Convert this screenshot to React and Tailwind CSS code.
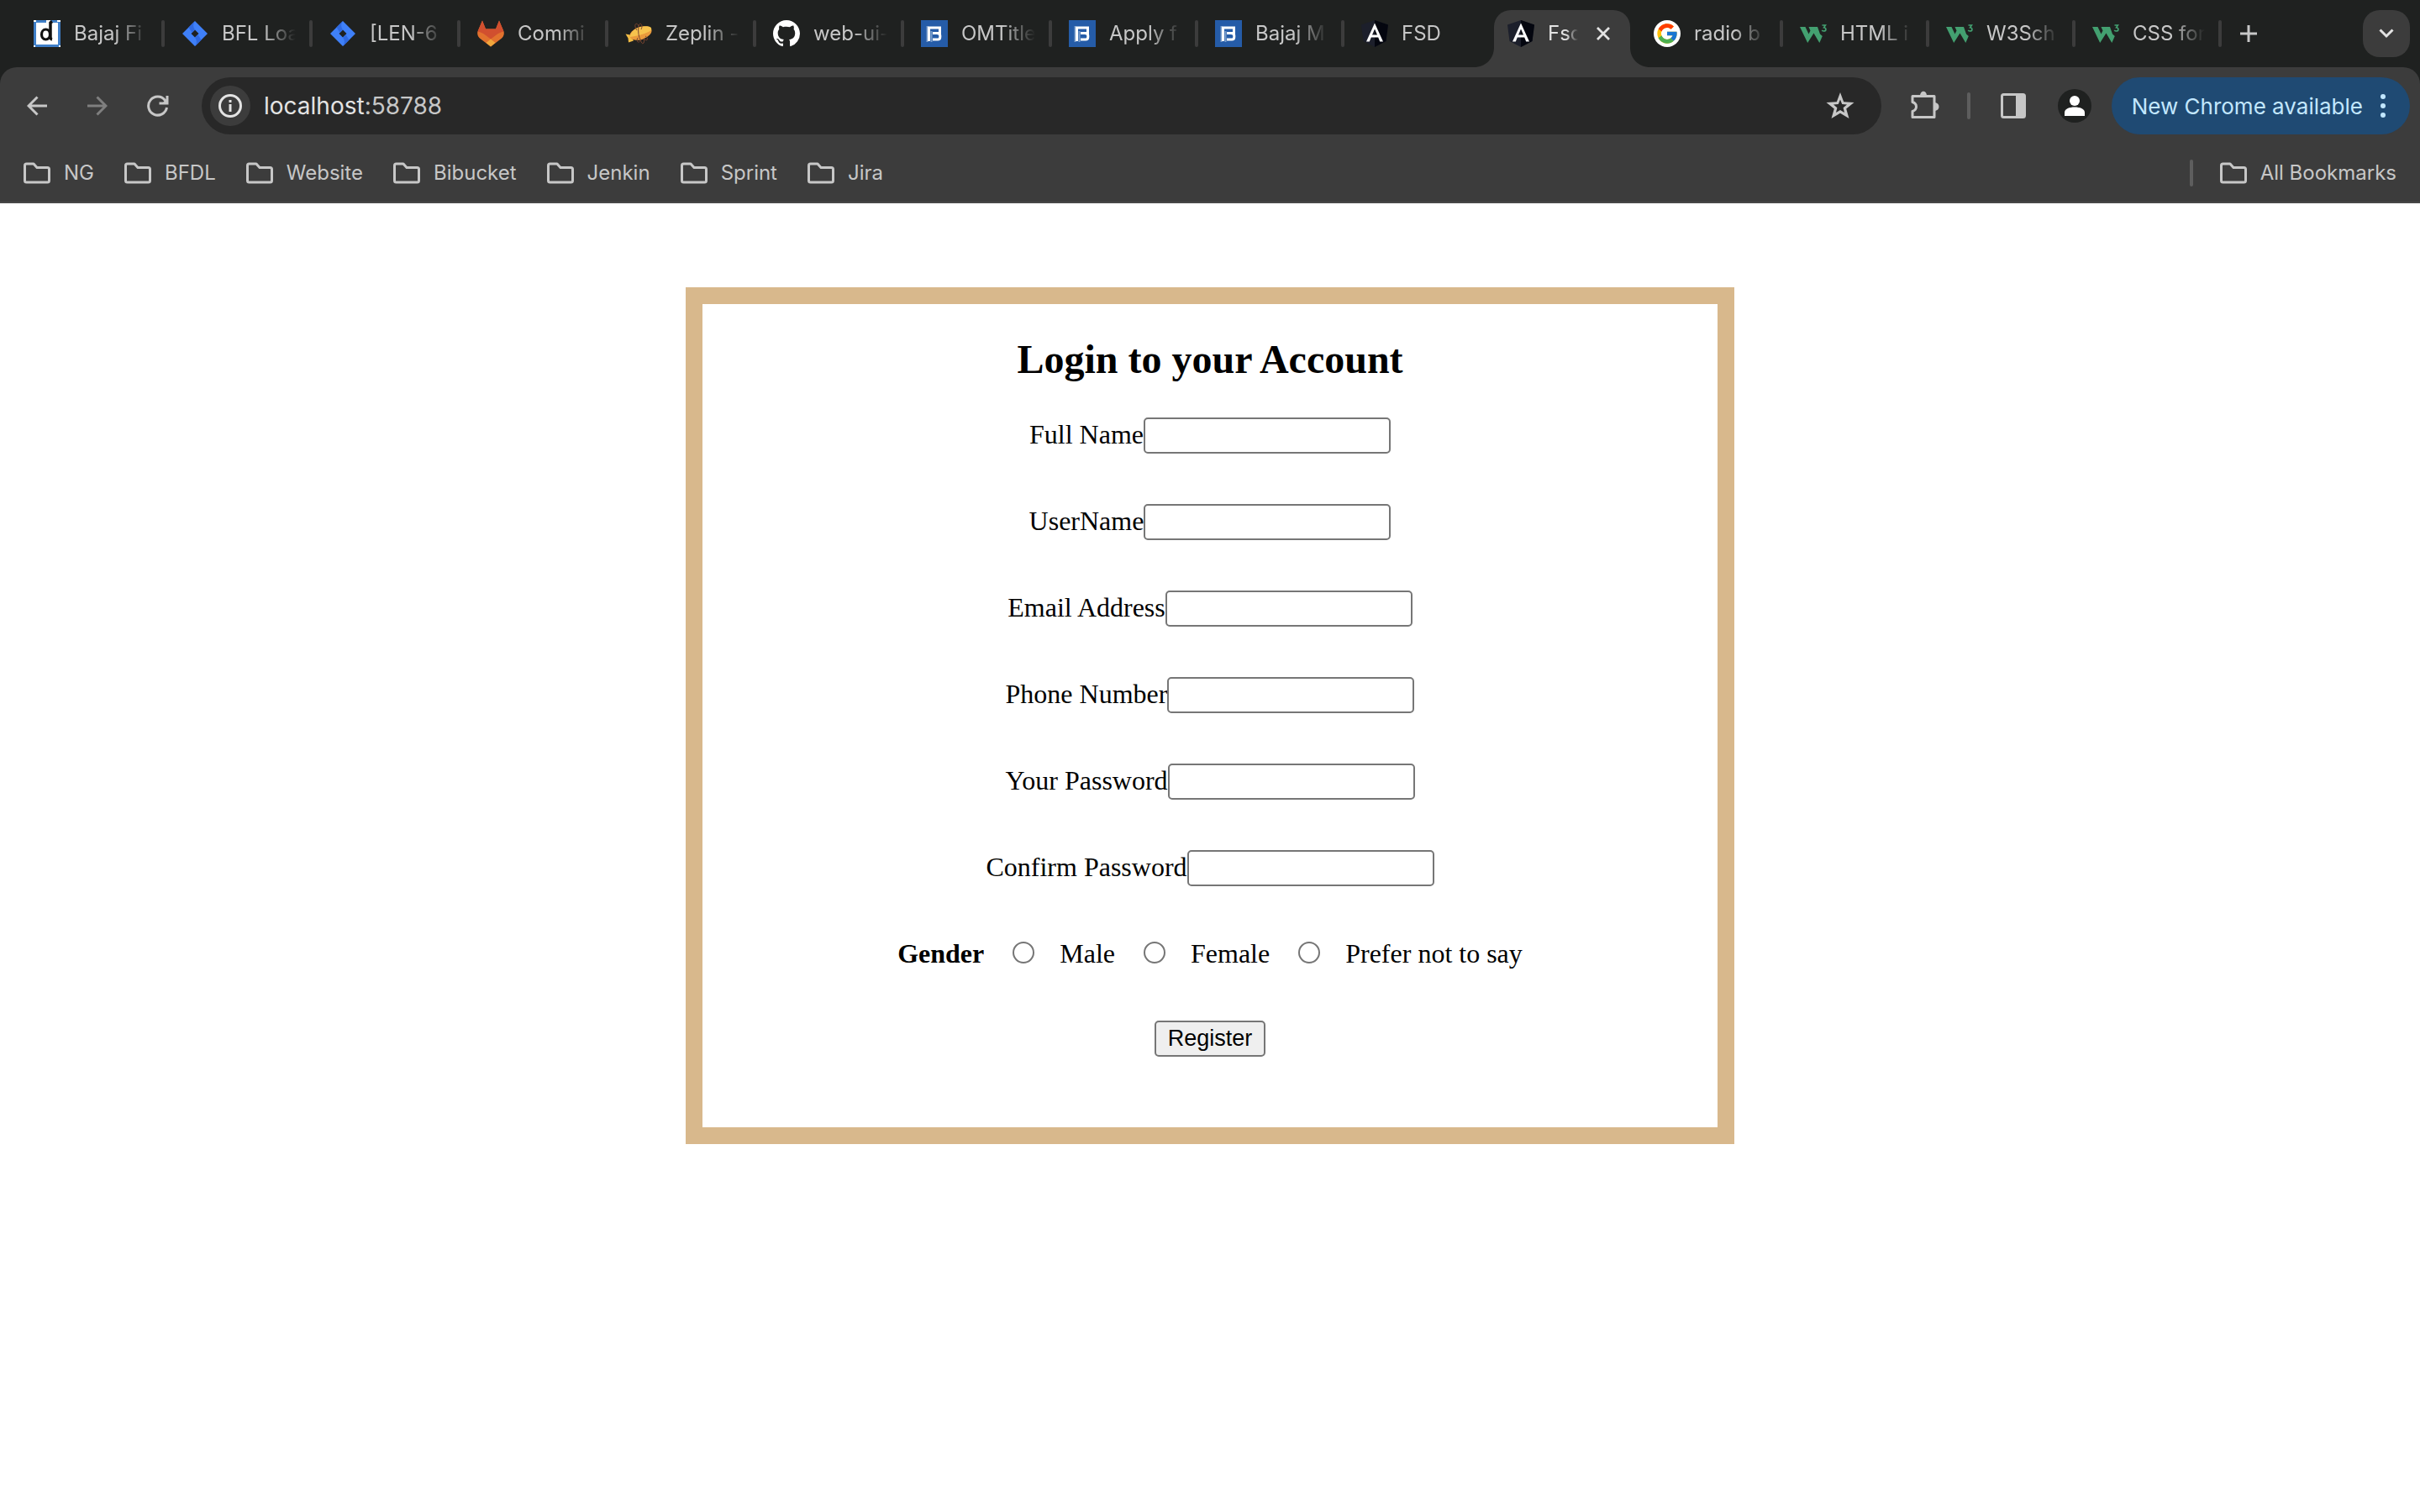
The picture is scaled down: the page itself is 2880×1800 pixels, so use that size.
import React from "react";
import { VscGithubInverted } from "react-icons/vsc";
import { FcGoogle } from "react-icons/fc";

function DocIcon() {
  return (
    <svg viewBox="0 0 32 32" className="size-8 shrink-0" aria-hidden="true">
      <rect width="32" height="32" fill="#3f7fc8" />
      <rect x="3" y="3" width="26" height="26" fill="#fff" />
      <path d="M0 0 H3 V2 H0 Z M15 0 H20 V5 H15 Z M28 0 H32 V2 H28 Z M0 30 H2 V32 H0 Z M30 30 H32 V32 H30 Z" fill="#fff" />
      <path d="M22 1.500 L20 3 V20 Q20 22.500 22 23" stroke="#111" strokeWidth="3.500" fill="none" />
      <ellipse cx="14.500" cy="17" rx="5" ry="6" stroke="#111" strokeWidth="3.200" fill="none" />
    </svg>
  );
}

function JiraIcon() {
  return (
    <svg viewBox="0 0 32 32" className="size-8 shrink-0" aria-hidden="true">
      <path d="M16 1 L31 16 L16 31 L1 16 Z M16 11.500 L11.500 16 L16 20.500 L20.500 16 Z" fill="#3f80f8" fillRule="evenodd" />
      <path d="M16 1 C13.500 4.500 13.500 8 16 11.500 L12.500 15 L8.500 8.500 Z" fill="#2f69e0" />
      <path d="M16 31 C18.500 27.500 18.500 24 16 20.500 L19.500 17 L23.500 23.500 Z" fill="#2f69e0" />
    </svg>
  );
}

function GitlabIcon() {
  return (
    <svg viewBox="0 0 32 32" className="size-8 shrink-0" aria-hidden="true">
      <path d="M6 0.500 L10 10.500 H22 L26 0.500 L31.500 13.500 C32.500 17 31 20 28.500 22 L16 31.500 L3.500 22 C1 20 -0.500 17 0.500 13.500 Z" fill="#e2722e" />
      <path d="M6 0.500 L10 10.500 H22 L26 0.500 L31.500 13.500 C28 14 24.500 16 22 18 L16 22.500 L10 18 C7.500 16 4 14 0.500 13.500 Z" fill="#d14f2f" />
      <path d="M16 22.500 L10.500 27 L16 31.500 L21.500 27 Z" fill="#f0a63c" />
    </svg>
  );
}

function ZeplinIcon() {
  return (
    <svg viewBox="0 0 32 32" className="size-8 shrink-0" aria-hidden="true">
      <path d="M0.500 16.500 L6 17.500 L10 24.500 L4 26.500 L3.500 21.500 Z" fill="#f3bd45" />
      <ellipse cx="18.500" cy="15.500" rx="13.500" ry="7.500" transform="rotate(-18 18.500 15.500)" fill="#e99a3c" />
      <path d="M5.500 20 C7 11 17 6.500 28 7.500 C31 8 32 10 30.500 12.500 C24 16.500 14 19 5.500 20 Z" fill="#f6c34d" />
      <path d="M14 12 C9 5 14 1.500 16 7 C17 1.500 22 5 19 11 M16 7 C15 14 16 20 18.500 24 C15 29 13 24 15 21 M18.500 24 C20 31 24 27 22 22 C28 27 27 20 24 19" stroke="#7a4530" strokeWidth="1" fill="none" />
    </svg>
  );
}

function BajajIcon() {
  return (
    <svg viewBox="0 0 32 32" className="size-8 shrink-0" aria-hidden="true">
      <rect width="32" height="32" fill="#255ca8" />
      <path d="M7.500 7 V26 M12.500 13 V26" stroke="#7d9fcc" strokeWidth="2" fill="none" />
      <path d="M9.500 25 V9 H22.500 V15.500 H14 M19 15.500 Q22.800 15.500 22.800 18.500 V20 Q22.800 23 20 23 H14" stroke="#fff" strokeWidth="3" fill="none" />
    </svg>
  );
}

function AngularIcon() {
  return (
    <svg viewBox="0 0 32 32" className="size-8 shrink-0" aria-hidden="true">
      <path d="M16 0 L32 5.500 L29.500 25 L16 32 L2.500 25 L0 5.500 Z" fill="#1c1f2b" />
      <path d="M16 0 L32 5.500 L29.500 25 L16 32 Z" fill="#04060f" />
      <path d="M16 3.500 L6 25.500 H9.800 L11.800 20.500 H20.200 L22.200 25.500 H26 Z M16 10.500 L19 17.500 H13 Z" fill="#fff" fillRule="evenodd" />
    </svg>
  );
}

function GoogleIcon() {
  return (
    <span className="flex size-8 shrink-0 items-center justify-center rounded-full bg-white">
      <FcGoogle className="size-7" aria-hidden="true" />
    </span>
  );
}

function GithubIcon() {
  return <VscGithubInverted className="size-8 shrink-0 text-white" aria-hidden="true" />;
}

function W3Icon() {
  return (
    <svg viewBox="0 0 32 32" className="size-8 shrink-0" aria-hidden="true">
      <path d="M0 8 H6.500 L10.500 16.500 L12.500 12.500 L10.500 8 H21 L24 16.500 L26.800 19 L23.300 27 L16.500 15.500 L9.200 27 Z" fill="#43a070" />
      <path d="M26.500 6 H30.500 L28.500 8.800 C32 9.300 31.500 13 28.500 13 C27.500 13 26.700 12.600 26.200 12" stroke="#43a070" strokeWidth="1.600" fill="none" />
    </svg>
  );
}

const tabsBefore = [
  { title: "Bajaj Fi", Icon: DocIcon, width: "w-44" },
  { title: "BFL Loa", Icon: JiraIcon, width: "w-44" },
  { title: "[LEN-6", Icon: JiraIcon, width: "w-44" },
  { title: "Commi", Icon: GitlabIcon, width: "w-44" },
  { title: "Zeplin -", Icon: ZeplinIcon, width: "w-44" },
  { title: "web-ui-", Icon: GithubIcon, width: "w-44" },
  { title: "OMTitle", Icon: BajajIcon, width: "w-44" },
  { title: "Apply f", Icon: BajajIcon, width: "w-[174px]" },
  { title: "Bajaj M", Icon: BajajIcon, width: "w-[174px]" },
  { title: "FSD", Icon: AngularIcon, width: "w-[174px]", last: true },
];

const tabsAfter = [
  { title: "radio b", Icon: GoogleIcon, width: "w-[174px]" },
  { title: "HTML i", Icon: W3Icon, width: "w-[174px]" },
  { title: "W3Sch", Icon: W3Icon, width: "w-[174px]" },
  { title: "CSS for", Icon: W3Icon, width: "w-[174px]" },
];

function Tab({ title, Icon, width, last }) {
  return (
    <div className={`flex h-full items-center ${width}`}>
      <button type="button" className="flex h-full min-w-0 flex-1 items-center gap-4 pr-4 pl-5 text-left">
        <Icon />
        <span className="min-w-0 flex-1 whitespace-nowrap mask-r-from-55% mask-r-to-100%">{title}</span>
      </button>
      <span className={`h-8 w-1 shrink-0 rounded-full ${last ? "" : "bg-[#3c3c3c]"}`} />
    </div>
  );
}

function TabStrip() {
  return (
    <div className="flex h-20 items-center bg-[#1f2120] pr-3 pl-5 text-2xl text-[#c7c7c7]">
      {tabsBefore.map((tab, i) => (
        <Tab key={i} {...tab} />
      ))}
      <div className="relative mr-2 ml-1 flex h-[68px] w-[162px] items-center self-end rounded-t-[20px] bg-[#3c3c3c] px-4 pb-3 text-[#e3e3e3]">
        <svg viewBox="0 0 24 24" className="absolute bottom-0 -left-6 size-6" aria-hidden="true">
          <path d="M24 0 V24 H0 C14 24 24 14 24 0 Z" fill="#3c3c3c" />
        </svg>
        <svg viewBox="0 0 24 24" className="absolute -right-6 bottom-0 size-6" aria-hidden="true">
          <path d="M0 0 V24 H24 C10 24 0 14 0 0 Z" fill="#3c3c3c" />
        </svg>
        <button type="button" className="flex min-w-0 flex-1 items-center gap-4 text-left">
          <AngularIcon />
          <span className="w-10 whitespace-nowrap mask-r-from-55% mask-r-to-90%">Fsd</span>
        </button>
        <button type="button" aria-label="Close tab" className="flex size-8 items-center justify-center">
          <svg viewBox="0 0 16 16" className="size-4" aria-hidden="true">
            <path d="M1 1 L15 15 M15 1 L1 15" stroke="#e3e3e3" strokeWidth="2.800" />
          </svg>
        </button>
      </div>
      {tabsAfter.map((tab, i) => (
        <Tab key={i} {...tab} />
      ))}
      <button type="button" aria-label="New tab" className="flex h-14 w-16 items-center justify-center">
        <svg viewBox="0 0 20 20" className="size-5" aria-hidden="true">
          <path d="M10 0 V20 M0 10 H20" stroke="#c7c7c7" strokeWidth="3" />
        </svg>
      </button>
      <button type="button" aria-label="Search tabs" className="ml-auto flex size-14 items-center justify-center rounded-[20px] bg-[#3c3c3c]">
        <svg viewBox="0 0 18 12" className="h-3 w-[18px]" aria-hidden="true">
          <path d="M1.500 1.500 L9 9 L16.500 1.500" stroke="#e3e3e3" strokeWidth="3" fill="none" />
        </svg>
      </button>
    </div>
  );
}

function ArrowIcon({ flip }) {
  return (
    <svg viewBox="0 0 24 24" className={`size-6 ${flip ? "-scale-x-100" : ""}`} fill="none" stroke="currentColor" strokeWidth="3" aria-hidden="true">
      <path d="M24 12 H2 M12.500 1.500 L2 12 L12.500 22.500" />
    </svg>
  );
}

function Toolbar() {
  return (
    <div className="bg-[#1f2120]">
      <div className="flex h-[92px] items-start rounded-t-[20px] bg-[#3c3c3c] pt-3 pr-3 text-[28px] text-[#c7c7c7]">
        <div className="flex h-[68px] shrink-0 items-center pl-8">
          <button type="button" aria-label="Back" className="mr-12">
            <ArrowIcon />
          </button>
          <button type="button" aria-label="Forward" className="mr-[46px] text-[#7f7f7f]">
            <ArrowIcon flip />
          </button>
          <button type="button" aria-label="Reload" className="mr-[38px]">
            <svg viewBox="0 0 28 26" className="h-[26px] w-7" fill="none" stroke="currentColor" strokeWidth="3" aria-hidden="true">
              <path d="M24.500 15 A11 11 0 1 1 22.500 6.500 L24.500 9" />
              <path d="M25 1 V10 H15.500" />
              <path d="M20 9 L26 3 V10 H19 Z" fill="currentColor" strokeWidth="0" />
            </svg>
          </button>
        </div>
        <div className="flex h-[68px] min-w-0 flex-1 items-center rounded-full bg-[#282828] pr-8 pl-2.5">
          <button type="button" aria-label="View site information" className="flex size-12 shrink-0 items-center justify-center rounded-full bg-[#3c3c3c]">
            <svg viewBox="0 0 28 28" className="size-7" fill="none" stroke="#e3e3e3" aria-hidden="true">
              <circle cx="14" cy="14" r="12.500" strokeWidth="3" />
              <path d="M14 12 V21 M14 7 V10" strokeWidth="3" />
            </svg>
          </button>
          <div className="ml-4 min-w-0 flex-1">
            <span className="text-[#e3e3e3]">localhost</span>
            <span>:58788</span>
          </div>
          <button type="button" aria-label="Bookmark this tab">
            <svg viewBox="0 0 34 32" className="h-8 w-[34px]" aria-hidden="true">
              <path
                d="M17 0 L21.200 11.200 L33.500 12 L24.200 19.500 L27.500 31 L17 24.700 L6.500 31 L9.800 19.500 L0.500 12 L12.800 11.200 Z M17 8.500 L14.800 14 L9 14.600 L13.400 18.300 L12 24 L17 21 L22 24 L20.600 18.300 L25 14.600 L19.200 14 Z"
                fill="currentColor"
                fillRule="evenodd"
              />
            </svg>
          </button>
        </div>
        <div className="flex h-[68px] shrink-0 items-center pl-[34px]">
          <button type="button" aria-label="Extensions">
            <svg viewBox="0 0 36 36" className="size-9" fill="none" stroke="currentColor" strokeWidth="3" strokeLinejoin="round" aria-hidden="true">
              <path d="M3 6.500 H29 V31.500 H3 V24.500 Q7.500 23 7.500 19 Q7.500 15 3 13.500 Z" />
              <path d="M12 6 C12 -1 20 -1 20 6 Z M30 14 C36 15 36 23 30 24 Z" fill="currentColor" strokeWidth="0" />
            </svg>
          </button>
          <span className="mr-9 ml-8 h-8 w-1 rounded-full bg-[#5e5e5e]" />
          <button type="button" aria-label="Side panel">
            <svg viewBox="0 0 30 30" className="size-[30px]" aria-hidden="true">
              <rect x="1.500" y="1.500" width="27" height="27" rx="2" fill="none" stroke="currentColor" strokeWidth="3" />
              <rect x="18" y="1" width="11" height="28" fill="currentColor" />
            </svg>
          </button>
          <button type="button" aria-label="Profile" className="mr-6 ml-[38px] flex size-10 items-center justify-center rounded-full bg-[#1f2120]">
            <svg viewBox="0 0 24 24" className="size-6" fill="#fff" aria-hidden="true">
              <circle cx="12" cy="6" r="6" />
              <path d="M0 24 V20 C0 15.500 6 13.500 12 13.500 S24 15.500 24 20 V24 Z" />
            </svg>
          </button>
          <button type="button" className="flex h-[68px] items-center gap-5 rounded-full bg-[#1f4a73] pr-7 pl-6 text-[26px] whitespace-nowrap text-[#c2e7ff]">
            New Chrome available
            <svg viewBox="0 0 8 28" className="h-7 w-2" fill="#c2e7ff" aria-hidden="true">
              <circle cx="4" cy="3" r="3" />
              <circle cx="4" cy="14" r="3" />
              <circle cx="4" cy="25" r="3" />
            </svg>
          </button>
        </div>
      </div>
    </div>
  );
}

function Bookmark({ children }) {
  return (
    <a href="#" className="flex items-center gap-4">
      <svg viewBox="0 0 32 26" className="h-[26px] w-8" fill="none" stroke="currentColor" strokeWidth="3" strokeLinejoin="round" aria-hidden="true">
        <path d="M1.500 4 Q1.500 2 3.500 2 H12 L16 6.500 H28.500 Q30.500 6.500 30.500 8.500 V22 Q30.500 24 28.500 24 H3.500 Q1.500 24 1.500 22 Z" />
      </svg>
      {children}
    </a>
  );
}

function BookmarksBar() {
  return (
    <nav className="flex h-[70px] items-center gap-9 border-b-2 border-[#474747] bg-[#3c3c3c] px-7 text-2xl text-[#c7c7c7]">
      {["NG", "BFDL", "Website", "Bibucket", "Jenkin", "Sprint", "Jira"].map((name) => (
        <Bookmark key={name}>{name}</Bookmark>
      ))}
      <div className="ml-auto flex items-center gap-8">
        <span className="h-8 w-1 rounded-full bg-[#5e5e5e]" />
        <Bookmark>All Bookmarks</Bookmark>
      </div>
    </nav>
  );
}

const fields = [
  { id: "fullName", label: "Full Name", type: "text" },
  { id: "userName", label: "UserName", type: "text" },
  { id: "email", label: "Email Address", type: "email" },
  { id: "phone", label: "Phone Number", type: "tel" },
  { id: "password", label: "Your Password", type: "password" },
  { id: "confirm", label: "Confirm Password", type: "password" },
];

function RegisterForm() {
  return (
    <form className="mx-auto mt-[100px] flex max-w-[1248px] flex-col items-center border-20 border-[#d8b88c] pt-[38px] pb-[84px] font-['Liberation_Serif',serif] text-[32px] leading-9 text-black">
      <h1 className="mb-[42px] text-5xl leading-[55px] font-bold">Login to your Account</h1>
      {fields.map(({ id, label, type }) => (
        <div key={id} className="mb-[60px] flex h-[43px] items-center">
          <label htmlFor={id} className="pb-1">
            {label}
          </label>
          <input id={id} type={type} className="h-[43px] w-[294px] rounded-[5px] border-2 border-[#767676] bg-white px-1 text-[26px]" />
        </div>
      ))}
      <fieldset className="leading-10">
        <legend className="float-left mr-[34px] font-bold">Gender</legend>
        <div className="flex items-center gap-[34px]">
          {["Male", "Female", "Prefer not to say"].map((name) => (
            <label key={name} className="flex items-center gap-[30px]">
              <input type="radio" name="gender" className="mb-0.5 size-[26px] appearance-none rounded-full border-2 border-[#767676] bg-white checked:border-8" />
              {name}
            </label>
          ))}
        </div>
      </fieldset>
      <button type="button" className="mt-[60px] h-[43px] rounded-[5px] border-2 border-[#767676] bg-[#efefef] px-3.5 font-['Liberation_Sans',sans-serif] text-[27px] leading-none">
        Register
      </button>
    </form>
  );
}

export default function App() {
  return (
    <div className="min-h-screen bg-white font-[Inter,sans-serif]">
      <header>
        <TabStrip />
        <Toolbar />
        <BookmarksBar />
      </header>
      <main>
        <RegisterForm />
      </main>
    </div>
  );
}
